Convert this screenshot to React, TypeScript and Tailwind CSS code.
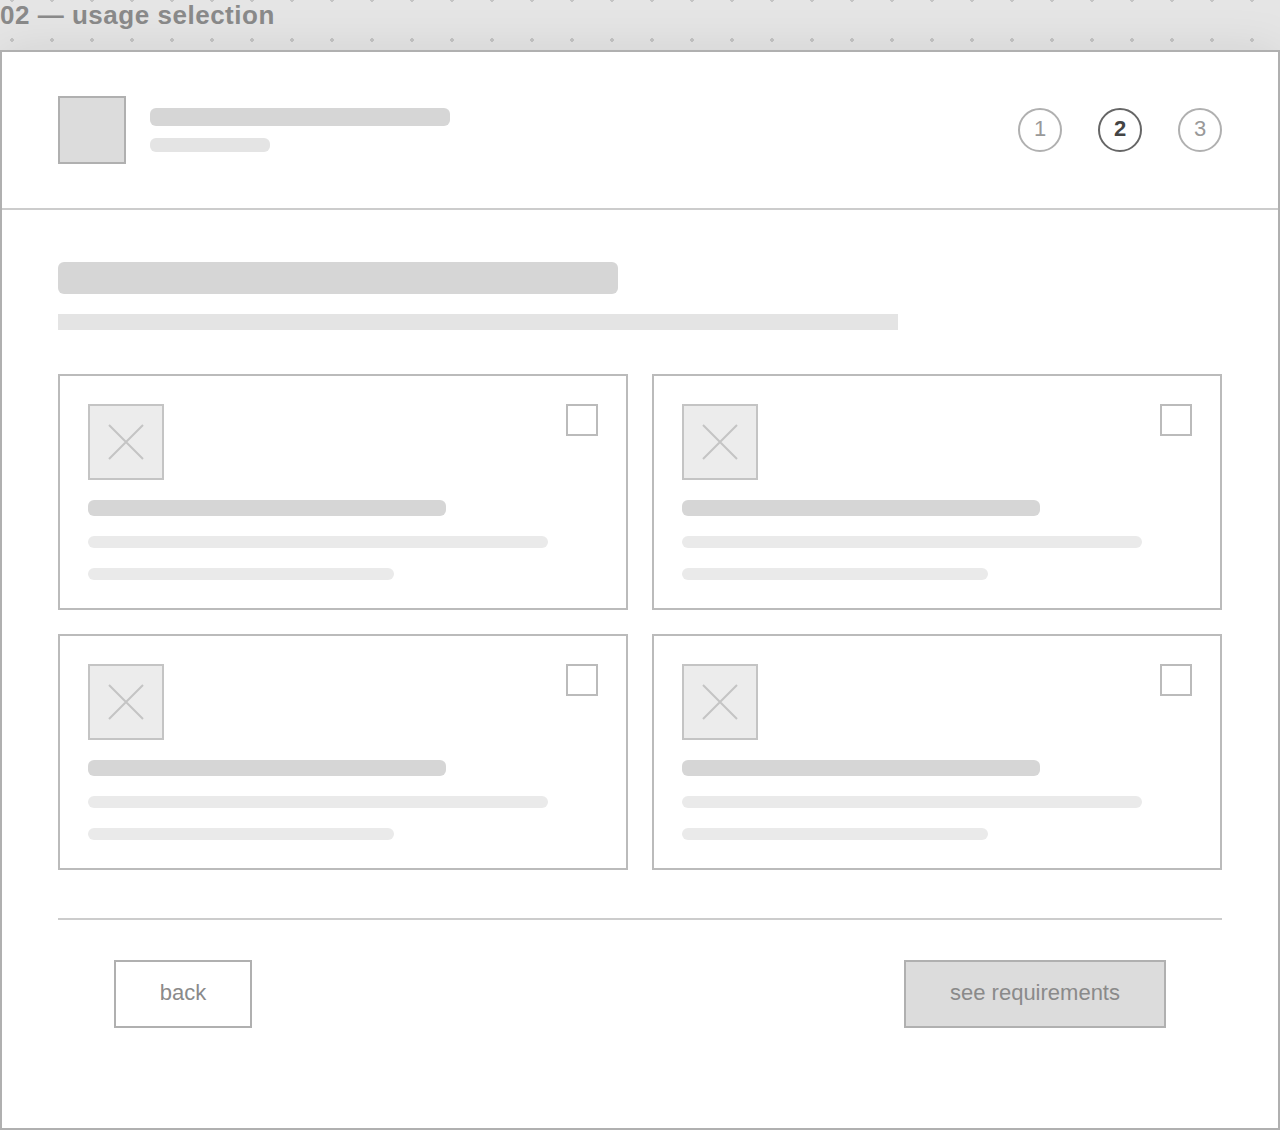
const steps = [
  { label: "1", active: false },
  { label: "2", active: true },
  { label: "3", active: false },
];

const usageOptions = ["a", "b", "c", "d"];

function StepDot({ label, active }: { label: string; active: boolean }) {
  return (
    <div
      className={`flex h-11 w-11 justify-center rounded-full border-2 pt-[7px] text-[22px] leading-6 ${
        active ? "border-[#666666] font-bold text-[#444444]" : "border-[#b0b0b0] text-[#999999]"
      }`}
    >
      {label}
    </div>
  );
}

function ImagePlaceholder() {
  return (
    <div className="flex h-[76px] w-[76px] items-center justify-center border-2 border-[#c4c4c4] bg-[#ececec]">
      <svg width="36" height="36" viewBox="0 0 36 36" fill="none" stroke="#c4c4c4" strokeWidth="2">
        <path d="M1 1L35 35M35 1L1 35" />
      </svg>
    </div>
  );
}

function UsageCard() {
  return (
    <div className="flex h-[236px] flex-col gap-5 border-2 border-[#bbbbbb] p-7">
      <div className="flex items-start justify-between">
        <ImagePlaceholder />
        <div className="h-8 w-8 border-2 border-[#bbbbbb] bg-white" />
      </div>
      <div className="h-4 w-[358px] rounded-md bg-[#d6d6d6]" />
      <div className="h-3 w-[460px] rounded-md bg-[#eaeaea]" />
      <div className="h-3 w-[306px] rounded-md bg-[#eaeaea]" />
    </div>
  );
}

export default function App() {
  return (
    <div className="flex h-[1130px] w-[1280px] flex-col overflow-hidden bg-[#e5e5e5] bg-[radial-gradient(circle,#c4c4c4_2px,transparent_2px)] bg-[length:40px_40px] bg-[position:-8px_-20px] font-['Liberation_Sans',Arial,sans-serif]">
      <h1 className="h-[50px] shrink-0 text-[26px] font-bold leading-[30px] tracking-[0.52px] text-[#8a8a8a]">
        02 — usage selection
      </h1>

      <div className="flex-1 border-2 border-[#b0b0b0] bg-white shadow-[0_4px_48px_rgba(0,0,0,0.1)]">
        <header className="flex h-[158px] items-center justify-between border-b-2 border-[#cccccc] px-14">
          <div className="flex items-center gap-6">
            <div className="h-[68px] w-[68px] border-2 border-[#b0b0b0] bg-[#dcdcdc]" />
            <div className="flex flex-col gap-3">
              <div className="h-[18px] w-[300px] rounded-md bg-[#d6d6d6]" />
              <div className="h-3.5 w-[120px] rounded-md bg-[#e4e4e4]" />
            </div>
          </div>
          <div className="flex gap-9">
            {steps.map((s) => (
              <StepDot key={s.label} label={s.label} active={s.active} />
            ))}
          </div>
        </header>

        <main className="px-14 pt-[52px]">
          <div className="h-8 w-[560px] rounded-md bg-[#d6d6d6]" />
          <div className="mt-5 h-4 w-[840px] bg-[#e4e4e4]" />

          <div className="mt-11 grid grid-cols-2 gap-6">
            {usageOptions.map((id) => (
              <UsageCard key={id} />
            ))}
          </div>

          <footer className="mt-12 flex justify-between border-t-2 border-[#cccccc] px-14 pt-10">
            <button className="h-[68px] w-[138px] border-2 border-[#b0b0b0] bg-white pb-1 text-[22px] text-[#8a8a8a]">
              back
            </button>
            <button className="h-[68px] w-[262px] border-2 border-[#b0b0b0] bg-[#dcdcdc] pb-1 text-[22px] text-[#8a8a8a]">
              see requirements
            </button>
          </footer>
        </main>
      </div>
    </div>
  );
}
